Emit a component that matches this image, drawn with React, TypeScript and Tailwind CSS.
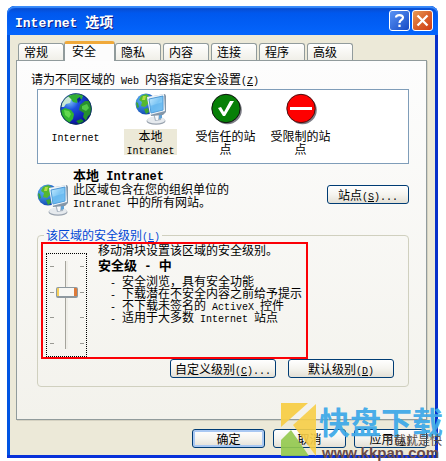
import { useState, type ReactNode } from 'react';
import clsx from 'clsx';

const tabs = ['常规', '安全', '隐私', '内容', '连接', '程序', '高级'];

const details = [
  <>安全浏览，具有安全功能</>,
  <>下载潜在不安全内容之前给予提示</>,
  <>不下载未签名的<En> ActiveX </En>控件</>,
  <>适用于大多数<En> Internet </En>站点</>,
];

// Latin text sits at half the width of the Chinese glyphs, and must not stretch the line
function En({ children, className = 'text-[10px]' }: { children: ReactNode; className?: string }) {
  return (
    <span className={clsx("whitespace-pre font-['Liberation_Mono',monospace] leading-0", className)}>{children}</span>
  );
}

function Key({ letter }: { letter: string }) {
  return (
    <En>
      (<u className="underline-offset-1">{letter}</u>)
    </En>
  );
}

function GlobeIcon() {
  return (
    <svg viewBox="0 0 32 32" className="size-8">
      <defs>
        <radialGradient id="sea" cx="0.3" cy="0.25" r="0.8">
          <stop offset="0" stopColor="#7cc4f5" />
          <stop offset="0.35" stopColor="#1c50e0" />
          <stop offset="1" stopColor="#0a0a96" />
        </radialGradient>
        <clipPath id="globe-edge">
          <circle cx="16" cy="16" r="15.5" />
        </clipPath>
      </defs>
      <circle cx="16" cy="16" r="15.7" fill="url(#sea)" />
      <g clipPath="url(#globe-edge)">
        <path d="M1 14 3 7 9 2 17 0 24 1 22 4 17 3 15 6 11 7 10 10 6 11 4 14Z" fill="#c9e9d6" />
        <path d="M8 3 15 1 23 2 22 6 18 7 17 10 13 9 11 6Z" fill="#2fae35" />
        <path d="M0 18 5 15 11 17 14 21 13 26 9 30 4 27 1 22Z" fill="#30b52f" />
        <path d="M4 17 9 18 11 21 9 25 5 22Z" fill="#62d84f" />
        <path d="M20 12 25 8 29 8 32 15 31 21 28 23 26 28 23 24 24 20 19 17Z" fill="#27912d" />
        <path d="M22 13 27 11 29 15 26 18 22 16Z" fill="#53c947" />
        <path d="M16 28 21 26 24 28 19 31Z" fill="#178a25" />
        <path d="M17 6 20 4 21 7 18 10Z" fill="#0d229f" />
      </g>
      <circle cx="16" cy="16" r="15.3" fill="none" stroke="#0a3a4e" strokeWidth="0.8" />
    </svg>
  );
}

function IntranetIcon() {
  return (
    <svg viewBox="0 0 32 32" className="size-8 shrink-0">
      <defs>
        <linearGradient id="screen" x1="0" y1="0" x2="1" y2="1">
          <stop offset="0" stopColor="#c8ecff" />
          <stop offset="0.5" stopColor="#7cc5f4" />
          <stop offset="1" stopColor="#a9defc" />
        </linearGradient>
        <radialGradient id="small-sea" cx="0.3" cy="0.3" r="0.8">
          <stop offset="0" stopColor="#59b3f2" />
          <stop offset="1" stopColor="#0b3fae" />
        </radialGradient>
      </defs>
      <circle cx="11" cy="11" r="10.5" fill="url(#small-sea)" />
      <path d="M6 3 11 1 14 3 12 7 14 10 10 14 6 13 7 9 4 7Z" fill="#55b82f" />
      <path d="M8 3 11 3 10 7 7 7Z" fill="#b4dc44" />
      <path d="M9 16 13 15 14 19 11 21Z" fill="#3da632" />
      <path d="M1 9 3 10 4 14 2 15Z" fill="#3da632" />
      <ellipse cx="21" cy="28" rx="9.5" ry="3.8" fill="#98a2ae" />
      <ellipse cx="21" cy="27" rx="9" ry="3.6" fill="#e6eaee" />
      <path d="M18 20 27 20 26 27 20 28Z" fill="#aab5c1" />
      <path d="M19 20 24 20 23 27 21 27Z" fill="#f6f8fa" />
      <path d="M24 22 27 22 27 25 24 26Z" fill="#5fa3d8" />
      <path d="M12 4 30 1 31 3 31 19 28 22 16 23Z" fill="#8496a8" />
      <path d="M12 4 29 1 30 18 15 22Z" fill="#eef4f9" />
      <path d="M14 6 28 3 28 17 16 20Z" fill="url(#screen)" stroke="#3f8ecf" strokeWidth="0.9" />
      <path d="M15 13 28 9 28 17 16 20Z" fill="#5bb0ec" opacity="0.6" />
    </svg>
  );
}

function TrustedIcon() {
  return (
    <svg viewBox="0 0 32 32" className="size-8">
      <circle cx="17.5" cy="17" r="14.3" fill="#7d7d86" />
      <circle cx="16" cy="15.5" r="14.2" fill="#078007" stroke="#111" strokeWidth="1" />
      <path d="M8 15 11 14 14 19 20 8 24 8 15 23 13 23Z" fill="#fff" />
    </svg>
  );
}

function RestrictedIcon() {
  return (
    <svg viewBox="0 0 32 32" className="size-8">
      <circle cx="17.5" cy="17" r="14.3" fill="#7d7d86" />
      <circle cx="16" cy="15.5" r="14.2" fill="#fe0000" stroke="#4a1010" strokeWidth="1" />
      <path d="M5 14h22v3H5z" fill="#fff" />
    </svg>
  );
}

const zones = [
  { id: 'internet', label: <En>Internet</En>, icon: <GlobeIcon /> },
  { id: 'intranet', label: <>本地<br /><En>Intranet</En></>, icon: <IntranetIcon /> },
  { id: 'trusted', label: <>受信任的站<br />点</>, icon: <TrustedIcon /> },
  { id: 'restricted', label: <>受限制的站<br />点</>, icon: <RestrictedIcon /> },
];

function XpButton({ children, className, focused }: { children: ReactNode; className?: string; focused?: boolean }) {
  return (
    <button
      type="button"
      className={clsx(
        'h-[19px] whitespace-nowrap rounded-[3px] border border-[#003c74] bg-linear-to-b from-white via-[#f5f4ef] to-[#e3e0d6]',
        focused && 'shadow-[inset_0_0_0_2px_#a9c8f2]',
        className
      )}
    >
      {children}
    </button>
  );
}

function TitleBar() {
  return (
    <header className="flex h-[29px] items-center gap-[2px] rounded-t-lg bg-linear-to-b from-[#0a47c4] via-[#0058ee] via-25% to-[#0465fd] pl-2 pr-[5px] text-white shadow-[inset_0_2px_1px_#3b8dfb]">
      <h1 className="flex-1 text-[14px] font-bold leading-5 [text-shadow:1px_1px_0_#0a1c88]">
        <En className="text-[13px]">Internet </En>选项
      </h1>
      <button
        type="button"
        aria-label="帮助"
        className="flex size-[21px] items-center justify-center rounded-[3px] border border-white bg-linear-to-br from-[#5a93f5] to-[#1648c4]"
      >
        <svg viewBox="0 0 19 19" className="size-[19px]" fill="none" stroke="#fff" strokeWidth="2.2">
          <path d="M6 6.5C6 3.5 13 3.2 13 6.6 13 9 9.5 9 9.5 12" />
          <path d="M9.5 13.6v2.4" />
        </svg>
      </button>
      <button
        type="button"
        aria-label="关闭"
        className="flex size-[21px] items-center justify-center rounded-[3px] border border-white bg-linear-to-br from-[#e79a55] via-[#d9622c] to-[#d03a14]"
      >
        <svg viewBox="0 0 19 19" className="size-[19px]" stroke="#fff" strokeWidth="2.3">
          <path d="M4.5 4.5 14.5 14.5M14.5 4.5 4.5 14.5" />
        </svg>
      </button>
    </header>
  );
}

function Ticks() {
  return (
    <div className="flex h-[78px] flex-col justify-between">
      {[0, 1, 2, 3].map((t) => (
        <i key={t} className="h-px w-1 bg-[#9a9a94]" />
      ))}
    </div>
  );
}

function LevelSlider() {
  const [level, setLevel] = useState(2);

  return (
    <div className="flex h-[104px] w-[41px] shrink-0 items-center justify-center gap-[2px] border border-dotted border-black">
      <Ticks />
      <input
        type="range"
        aria-label="安全级别"
        min={0}
        max={3}
        value={level}
        onChange={(e) => setLevel(Number(e.target.value))}
        className="h-[88px] w-[22px] appearance-none bg-[linear-gradient(90deg,#a5a49c_1px,#efeee8_1px)] bg-[length:3px_100%] bg-center bg-no-repeat outline-none [direction:rtl] [writing-mode:vertical-lr] [&::-webkit-slider-thumb]:h-[11px] [&::-webkit-slider-thumb]:w-[22px] [&::-webkit-slider-thumb]:appearance-none [&::-webkit-slider-thumb]:rounded-[2px] [&::-webkit-slider-thumb]:border [&::-webkit-slider-thumb]:border-b-2 [&::-webkit-slider-thumb]:border-[#8d989f] [&::-webkit-slider-thumb]:bg-[linear-gradient(90deg,#f6cf57_2px,#f7f7f4_2px,#f7f7f4_17px,#dd7a3a_17px)]"
      />
      <Ticks />
    </div>
  );
}

function Watermark() {
  return (
    <div className="pointer-events-none absolute bottom-0 right-0 h-[58px] w-[165px]">
      <svg viewBox="0 0 36 53" className="absolute left-0 top-0 h-[53px] w-9">
        <path d="M0 0h27L0 24Z" fill="#f7ce48" opacity="0.95" />
        <path d="M35 1V53L12 22Z" fill="#f7ce48" opacity="0.9" />
        <path d="M0 37 10 27 28 53H0Z" fill="#92c94e" opacity="0.9" />
      </svg>
      <span className="absolute left-[38px] top-0 whitespace-nowrap text-[31px] font-bold leading-9 text-[#3fa9e8]/95">
        快盘下载
      </span>
      <span className="absolute left-[101px] top-[31px] whitespace-nowrap text-[12px] leading-3 text-[#574a46]">下载就是快</span>
      <span className="absolute left-[41px] top-[42px] whitespace-nowrap font-['Liberation_Sans',sans-serif] text-[15px] font-bold leading-4 text-[#6a4b48]">
        www.kkpan.com
      </span>
    </div>
  );
}

export default function App() {
  const [activeTab, setActiveTab] = useState('安全');
  const [zone, setZone] = useState('intranet');

  return (
    <main className="relative bg-white pb-[3px] pl-[7px] pr-2 pt-[6px] font-['Noto_Sans_CJK_SC',sans-serif] text-[12px] leading-3 text-black">
      <section className="rounded-t-lg border-b-[3px] border-[#0831d9] bg-linear-to-r from-[#0054e3] from-50% to-[#0831c9] to-50%">
        <TitleBar />
        <div className="mx-[3px] bg-[#ece9d8] pb-[7px] pl-[6px] pr-2 pt-[6px]">
          <nav role="tablist" className="flex items-end gap-[2px] pl-[2px]">
            {tabs.map((tab) => (
              <button
                key={tab}
                type="button"
                role="tab"
                aria-selected={tab === activeTab}
                onClick={() => setActiveTab(tab)}
                className={clsx(
                  'rounded-t-[3px] border border-b-0 border-[#919b9c] text-left',
                  tab === activeTab
                    ? 'relative -mx-[2px] -mb-px h-5 w-[51px] border-t-[3px] border-t-[#f0a93a] bg-[#fcfcfc] pb-[3px] pl-[7px]'
                    : 'h-[17px] w-[46px] bg-linear-to-b from-white to-[#f0efe8] pl-[5px]'
                )}
              >
                {tab}
              </button>
            ))}
          </nav>

          <div
            role="tabpanel"
            className="border border-[#919b9c] bg-linear-to-b from-[#fdfdfd] to-[#f3f2ec] pb-8 pl-[14px] pr-[17px] pt-[10px] shadow-[1px_1px_0_#d5d2c2]"
          >
            <p className="leading-4">
              请为不同区域的<En> Web </En>内容指定安全设置<Key letter="Z" />
            </p>

            <div className="pl-[6px]">
              <div className="mt-[2px] flex border border-[#7f9db9] bg-white pb-2 pt-[3px]">
                {zones.map(({ id, label, icon }) => (
                  <button
                    key={id}
                    type="button"
                    aria-pressed={id === zone}
                    onClick={() => setZone(id)}
                    className="flex w-[75px] flex-col items-center gap-1"
                  >
                    {icon}
                    <span className={clsx('whitespace-nowrap leading-[13px]', id === zone && 'bg-[#ece9d8] px-[2px]')}>
                      {label}
                    </span>
                  </button>
                ))}
              </div>

              <div className="mt-1 flex items-end gap-1">
                <IntranetIcon />
                <div className="flex-1 self-start">
                  <h2 className="text-[13px] font-bold leading-[14px]">
                    本地<En className="text-[12px]"> Intranet</En>
                  </h2>
                  <p className="pb-2 leading-[13px]">
                    此区域包含在您的组织单位的
                    <br />
                    <En>Intranet </En>中的所有网站。
                  </p>
                </div>
                <XpButton className="mb-3 w-[82px]">
                  站点
                  <Key letter="S" />
                  <En>...</En>
                </XpButton>
              </div>

              <fieldset className="mt-3 rounded-[4px] border border-[#d0d0bf] pb-2 pl-[3px]">
                <legend className="ml-[3px] px-[2px] leading-[14px] text-[#0046d5]">
                  该区域的安全级别
                  <Key letter="L" />
                </legend>
                <div className="flex h-[117px] w-[267px] items-start gap-[11px] border-2 border-[#fb0006] pl-[3px]">
                  <div className="pt-[9px]">
                    <LevelSlider />
                  </div>
                  <div className="whitespace-nowrap">
                    <p>移动滑块设置该区域的安全级别。</p>
                    <h3 className="mt-[2px] text-[13px] font-bold leading-[14px]">
                      安全级<En className="text-[12px]"> - </En>中
                    </h3>
                    <ul className="mt-[3px] pl-3">
                      {details.map((item, i) => (
                        <li key={i}>
                          <En>- </En>
                          {item}
                        </li>
                      ))}
                    </ul>
                  </div>
                </div>
                <div className="flex justify-end gap-3 pr-[14px]">
                  <XpButton className="w-[106px]">
                    自定义级别
                    <Key letter="C" />
                    <En>...</En>
                  </XpButton>
                  <XpButton className="w-[106px]">
                    默认级别
                    <Key letter="D" />
                  </XpButton>
                </div>
              </fieldset>
            </div>
          </div>

          <footer className="mt-[9px] flex justify-end gap-2">
            <XpButton className="w-[73px]" focused>确定</XpButton>
            <XpButton className="w-[73px]">取消</XpButton>
            <XpButton className="w-[73px]">
              应用
              <Key letter="A" />
            </XpButton>
          </footer>
        </div>
      </section>
      <Watermark />
    </main>
  );
}
